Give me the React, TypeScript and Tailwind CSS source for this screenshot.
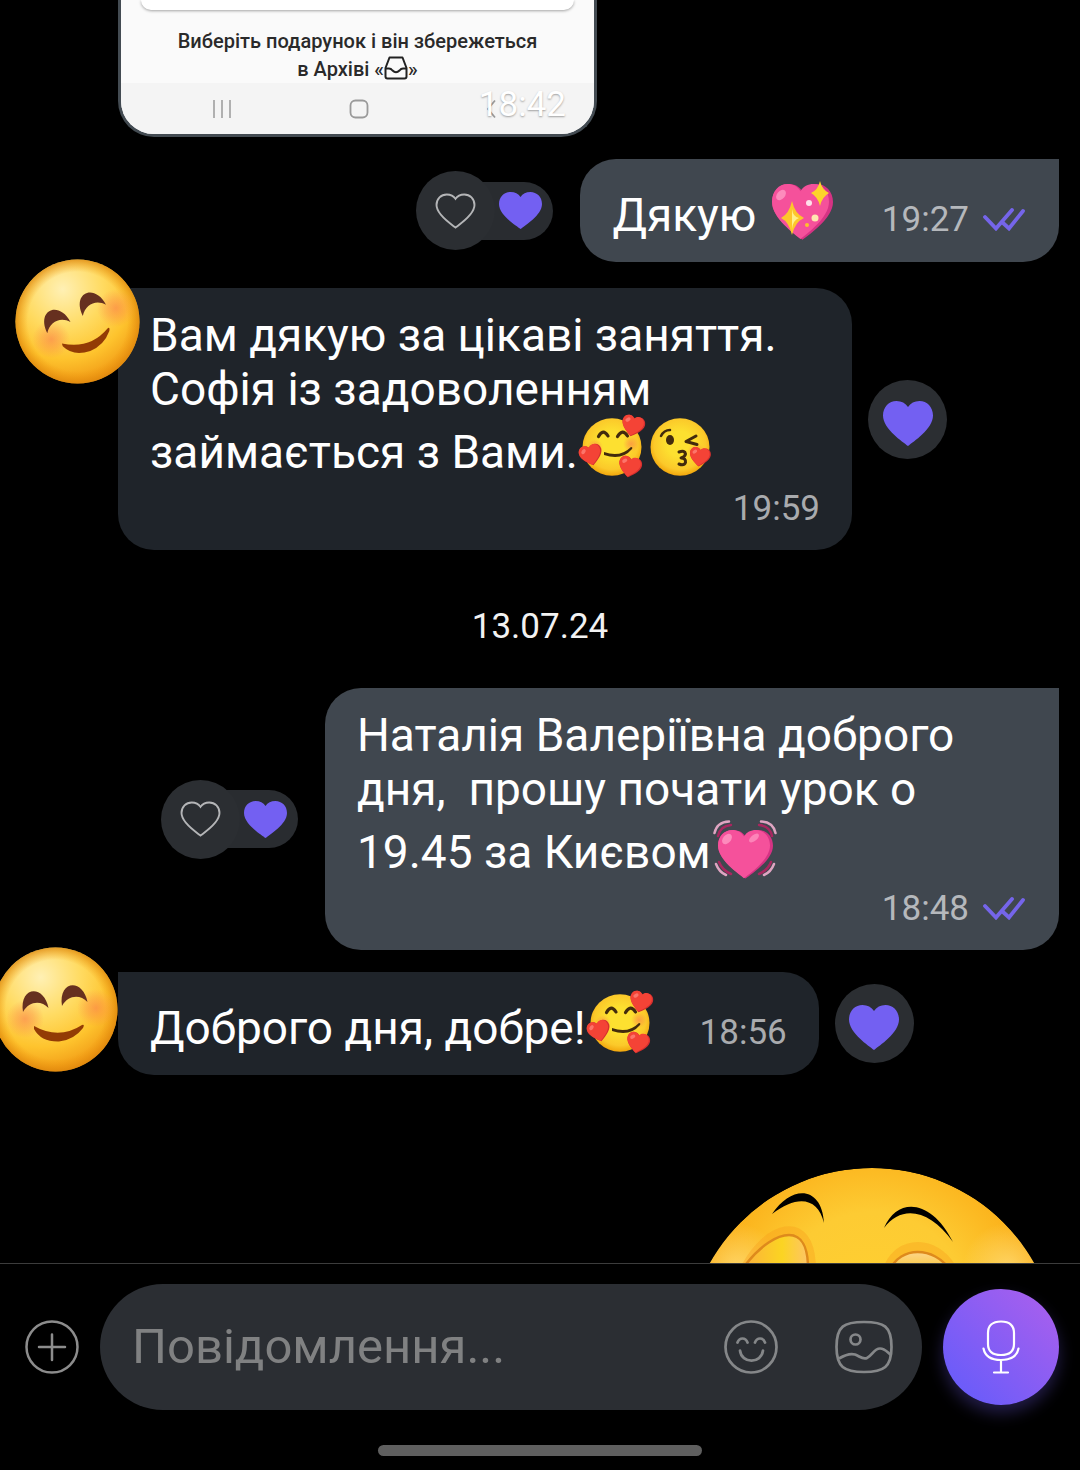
import React, { useState } from "react";

const HEART =
  "M25 45C20 41 0 28 0 14.5C0 6 6 0 13.5 0C18.5 0 22.5 2 25 6C27.5 2 31.5 0 36.5 0C44 0 50 6 50 14.5C50 28 30 41 25 45Z";

type EmojiName = "sparkling" | "hearts" | "kiss" | "beating";

interface BubbleProps {
  children: React.ReactNode;
  emojis: EmojiName[];
  time: string;
  outgoing?: boolean;
  long?: boolean;
}

// Gradients shared by all emoji and stickers
const Gradients = () => (
  <svg className="absolute size-0" aria-hidden="true">
    <defs>
      <radialGradient id="face" cx="0.5" cy="0.45" r="0.55">
        <stop offset="0.4" stopColor="#fde030" />
        <stop offset="0.8" stopColor="#fbc92a" />
        <stop offset="1" stopColor="#f2a60c" />
      </radialGradient>
      <radialGradient id="ball" cx="0.38" cy="0.24" r="0.8">
        <stop offset="0" stopColor="#fff0b4" />
        <stop offset="0.4" stopColor="#ffdb62" />
        <stop offset="0.7" stopColor="#fec42e" />
        <stop offset="1" stopColor="#ef9412" />
      </radialGradient>
      <radialGradient id="rim" cx="0.5" cy="0.5" r="0.5">
        <stop offset="0.8" stopColor="#f0960c" stopOpacity="0" />
        <stop offset="1" stopColor="#dc850c" stopOpacity="0.75" />
      </radialGradient>
      <radialGradient id="blush">
        <stop offset="0" stopColor="#fb7d4c" stopOpacity="0.6" />
        <stop offset="0.5" stopColor="#fb8548" stopOpacity="0.35" />
        <stop offset="1" stopColor="#fb8a4c" stopOpacity="0" />
      </radialGradient>
      <radialGradient id="big" cx="0.5" cy="0.38" r="0.58">
        <stop offset="0" stopColor="#ffd030" />
        <stop offset="0.45" stopColor="#fdcb33" />
        <stop offset="1" stopColor="#fa9c06" />
      </radialGradient>
      <radialGradient id="glow">
        <stop offset="0" stopColor="#ffdf80" stopOpacity="0.7" />
        <stop offset="1" stopColor="#ffdf80" stopOpacity="0" />
      </radialGradient>
      <linearGradient id="lid" x1="0" y1="0" x2="1" y2="0">
        <stop offset="0" stopColor="#fbb03c" />
        <stop offset="0.6" stopColor="#fbd422" />
        <stop offset="1" stopColor="#fdc566" />
      </linearGradient>
      <linearGradient id="lidRight" x1="0" y1="0" x2="0" y2="1">
        <stop offset="0" stopColor="#fdd58a" />
        <stop offset="1" stopColor="#fbc93a" />
      </linearGradient>
      <clipPath id="bigClip">
        <circle cx="186" cy="186" r="186" />
      </clipPath>
    </defs>
  </svg>
);

const RedHeart = ({ x, y, size, angle }: { x: number; y: number; size: number; angle: number }) => (
  <g transform={`translate(${x} ${y}) rotate(${angle}) scale(${size / 50}) translate(-25 -22)`}>
    <path d={HEART} fill="#d52f2f" />
    <path d={HEART} fill="#f44336" transform="scale(0.94 0.97)" />
    <ellipse cx="11" cy="11" rx="6" ry="4" fill="#ff8a80" opacity="0.7" transform="rotate(-40 11 11)" />
  </g>
);

const emojiArt: Record<EmojiName, React.ReactNode> = {
  sparkling: (
    <>
      <path d={HEART} transform="translate(4 5) scale(1.22 1.24)" fill="#d63384" />
      <path d={HEART} transform="translate(4 5) scale(1.14 1.22)" fill="#f5519b" />
      <ellipse cx="13" cy="16" rx="6" ry="4" fill="#ff9ac4" opacity="0.8" transform="rotate(-50 13 16)" />
      <path d="M24 22Q27 35 36 39Q27 43 24 56Q21 43 13 39Q21 35 24 22Z" fill="#fdc72b" />
      <path d="M24 30Q25 38 31 39Q25 41 24 50Z" fill="#fff08a" />
      <path d="M52 2Q54 11 61 14Q54 18 52 27Q50 18 43 14Q50 11 52 2Z" fill="#fdd32b" />
      <circle cx="41" cy="24" r="3" fill="#ffe0ea" />
      <circle cx="47" cy="39" r="3.5" fill="#ffe6b0" />
      <circle cx="39" cy="46" r="2" fill="#fdc12b" />
    </>
  ),
  hearts: (
    <>
      <ellipse cx="34" cy="31" rx="29.5" ry="28.8" fill="url(#face)" />
      <circle cx="17" cy="31" r="8" fill="url(#blush)" />
      <circle cx="53" cy="28" r="8" fill="url(#blush)" />
      <g fill="none" stroke="#422b0d" strokeWidth="3.2" strokeLinecap="round">
        <path d="M20.500 20.500Q25 12 30 20" />
        <path d="M39.500 20.500Q44.500 12 49.500 20" />
      </g>
      <path d="M26 36Q42 42 53 31Q55 31 54 33Q44 45 26 39Z" fill="#422b0d" />
      <RedHeart x={55} y={10} size={23} angle={14} />
      <RedHeart x={13} y={39} size={23} angle={-14} />
      <RedHeart x={52} y={51} size={23} angle={12} />
    </>
  ),
  kiss: (
    <>
      <ellipse cx="34" cy="31" rx="29.5" ry="28.8" fill="url(#face)" />
      <circle cx="50" cy="36" r="9" fill="url(#blush)" />
      <ellipse cx="24" cy="24" rx="4" ry="5" fill="#422b0d" />
      <g fill="none" stroke="#422b0d" strokeLinecap="round" strokeLinejoin="round" strokeWidth="2.500">
        <path d="M15 20Q18 14 24 14" />
        <path d="M50 20L40 25.500L51 28.500" strokeWidth="3" />
        <path d="M33 36Q39 34 39.500 38Q39 41 35 42Q40 42 39.500 46.500Q38 50 33 48" strokeWidth="3" />
      </g>
      <RedHeart x={54} y={41} size={21} angle={8} />
    </>
  ),
  beating: (
    <>
      <g fill="none" strokeLinecap="round" strokeWidth="2.5">
        <path d="M3.500 17Q6 6 18 5.500M64.500 17Q62 6 50 5.500M5 48Q8 56 15 59M63 48Q60 56 53 59" stroke="#dfa5c2" />
        <path d="M7 20Q9 10 20 9M61 20Q59 10 48 9M8 46Q11 54 20 58M60 46Q57 54 48 58" stroke="#a8265f" />
      </g>
      <path d={HEART} transform="translate(7 14) scale(1.1 1.08)" fill="#d63384" />
      <path d={HEART} transform="translate(7 14) scale(1.04 1.07)" fill="#f5519b" />
      <ellipse cx="16" cy="23" rx="6" ry="4" fill="#ff9ac4" opacity="0.8" transform="rotate(-50 16 23)" />
      <ellipse cx="43" cy="22" rx="6" ry="3" fill="#ff9ac4" opacity="0.7" transform="rotate(-40 43 22)" />
    </>
  ),
};

const Emoji = ({ name }: { name: EmojiName }) => (
  <svg viewBox="0 0 68 62" className="inline-block h-[62px] w-[68px] overflow-visible align-[-10px]">
    {emojiArt[name]}
  </svg>
);

const FaceSticker = ({ className, angle = 0 }: { className: string; angle?: number }) => (
  <svg viewBox="0 0 125 125" className={className}>
    <circle cx="62.500" cy="62.500" r="62" fill="url(#ball)" />
    <circle cx="62.500" cy="62.500" r="62" fill="url(#rim)" />
    <g transform={`rotate(${angle} 62 62)`}>
      <circle cx="32" cy="72" r="19" fill="url(#blush)" />
      <circle cx="103" cy="61" r="19" fill="url(#blush)" />
      <g fill="#66301f">
        <path d="M30 65C26 39 51 37 55.500 61C48 53 36 54 30 65Z" />
        <path d="M69 59C65 33 90 31 94.500 55C87 47 75 48 69 59Z" />
      </g>
      <path d="M41 79Q66 93 89 78Q92 77 90 81Q81 93 66 94.500Q48 95 41 82Z" fill="#933b05" />
    </g>
  </svg>
);

const BigSticker = () => (
  <svg viewBox="0 0 372 372" className="size-[372px]">
    <g clipPath="url(#bigClip)">
      <circle cx="186" cy="186" r="186" fill="url(#big)" />
      <circle cx="50" cy="100" r="45" fill="url(#glow)" />
      <circle cx="322" cy="100" r="45" fill="url(#glow)" />
      <path d="M62 100C82 62 122 46 123 100" fill="none" stroke="#f59c1a" strokeWidth="14" opacity="0.35" />
      <path d="M204 102C214 74 248 74 264 102" fill="none" stroke="#f59c1a" strokeWidth="14" opacity="0.35" />
      <path d="M57 100C75 76 92 67 103 67C116 67 122 80 122 100Z" fill="url(#lid)" stroke="#de8a1c" strokeWidth="2.5" />
      <path d="M204 102C214 78 248 78 264 102Z" fill="url(#lidRight)" stroke="#de8a1c" strokeWidth="2.5" />
      <path d="M86 46C106 16 136 18 138 55C132 30 112 26 86 46Z" fill="#000" />
      <path d="M198 60C212 28 246 32 267 74C244 42 216 36 198 60Z" fill="#000" />
    </g>
  </svg>
);

const HeartIcon = ({ className }: { className: string }) => (
  <svg viewBox="0 0 50 45" preserveAspectRatio="none" className={className}>
    <path d={HEART} fill="#7360f2" />
  </svg>
);

const Reaction = () => (
  <button aria-label="Вподобати" className="flex size-[79px] shrink-0 items-center justify-center rounded-full bg-[#2b2e32]">
    <HeartIcon className="mt-2 h-[45px] w-[50px]" />
  </button>
);

const ReactionPill = () => (
  <div className="flex shrink-0 items-center">
    <button
      aria-label="Вподобати"
      className="relative z-10 flex size-[79px] items-center justify-center rounded-full bg-[#2b2e32]"
    >
      <svg viewBox="-2 -2 54 49" preserveAspectRatio="none" className="h-9 w-[41px]" fill="none">
        <path d={HEART} stroke="#b4b5b7" strokeWidth="2.500" />
      </svg>
    </button>
    <div className="-ml-10 flex h-[58px] w-[98px] items-center justify-end rounded-r-full bg-[#292c30] pr-[11px]">
      <HeartIcon className="h-[37px] w-[43px]" />
    </div>
  </div>
);

const SeenIcon = () => (
  <svg viewBox="0 0 42 23" className="h-[23px] w-[42px]" fill="none" stroke="#7565ea" strokeWidth="3.800">
    <path d="M2 9L13 20.500L29 2" strokeLinecap="round" />
    <path d="M19.500 14.500L26 20.500L40 3" strokeLinecap="round" />
  </svg>
);

const MessageTime = ({ time, outgoing }: { time: string; outgoing?: boolean }) => (
  <div className={`flex items-baseline gap-[14px] text-[35px] leading-[42px] ${outgoing ? "text-[#b5b8bc]" : "text-[#a9abae]"}`}>
    <time>{time}</time>
    {outgoing && <SeenIcon />}
  </div>
);

const Bubble: React.FC<BubbleProps> = ({ children, emojis, time, outgoing, long }) => (
  <div
    className={`py-5 pl-8 ${outgoing ? "rounded-[36px] rounded-tr-none bg-[#40474f] pr-[34px]" : "rounded-[36px] rounded-tl-none bg-[#1f242a] pr-8"} ${
      long ? "w-[734px]" : "flex items-baseline gap-[46px]"
    }`}
  >
    <p className="text-[46px] leading-[54px] whitespace-pre-wrap text-white">
      {children}
      {emojis.map((name) => (
        <Emoji key={name} name={name} />
      ))}
    </p>
    <div className={long ? "mt-[9px] flex justify-end" : ""}>
      <MessageTime time={time} outgoing={outgoing} />
    </div>
  </div>
);

// Shared screenshot, scrolled so only its bottom part is visible
const PhotoMessage = () => (
  <div className="relative ml-[118px] w-[479px] overflow-hidden rounded-b-[36px] border-x-[3px] border-b-[3px] border-[#434b52] bg-[#fafafa]">
    <div className="mx-5 h-[10px] rounded-b-[10px] bg-white shadow-[0_1px_3px_rgba(0,0,0,0.35)]" />
    <p className="mt-[17px] text-center text-[20px] leading-[28px] font-medium text-[#2a2a2a]">
      Виберіть подарунок і він збережеться
      <br />в Архіві «
      <svg viewBox="0 0 24 24" className="inline-block size-6 align-[-4px]" fill="none" stroke="#222" strokeWidth="2" strokeLinejoin="round">
        <path d="M5.500 1.500H18.500L22.500 12V20.500Q22.500 22.500 20.500 22.500H3.500Q1.500 22.500 1.500 20.500V12Z" />
        <path d="M1.500 12.500H5Q7 12.500 8.500 14.500Q12 18 15.500 14.500Q17 12.500 19 12.500H22.500" />
      </svg>
      »
    </p>
    <div className="flex h-[51px] items-center justify-between bg-[#f4f4f4] pr-[98px] pl-[91px] text-[#9a9a9a]">
      <svg viewBox="0 0 20 20" className="size-5" stroke="currentColor" strokeWidth="1.500">
        <path d="M2 1V19M10 1V19M18 1V19" />
      </svg>
      <svg viewBox="0 0 20 20" className="size-5" fill="none" stroke="currentColor" strokeWidth="1.800">
        <rect x="1.500" y="1.500" width="17" height="17" rx="5" />
      </svg>
      <svg viewBox="0 0 10 20" className="h-5 w-[10px]" fill="none" stroke="currentColor" strokeWidth="1.800">
        <path d="M9 1.500L2 10L9 18.500" />
      </svg>
    </div>
    <time className="absolute right-7 bottom-2 text-[35px] leading-[42px] text-white [text-shadow:0_1px_2px_rgba(0,0,0,0.35)]">
      18:42
    </time>
  </div>
);

const Composer = () => {
  const [text, setText] = useState("");

  return (
    <footer className="shrink-0 border-t border-[#3c3c3c] bg-black pt-5">
      <form className="flex items-center gap-[21px] pr-[21px] pl-[25px]" onSubmit={(e) => e.preventDefault()}>
        <button type="button" aria-label="Додати" className="shrink-0">
          <svg viewBox="0 0 54 54" className="size-[54px]" fill="none" stroke="#8c8c8c" strokeWidth="2.500" strokeLinecap="round">
            <circle cx="27" cy="27" r="25.500" />
            <path d="M27 14.500V40M14 27H40" />
          </svg>
        </button>
        <div className="flex h-[126px] min-w-0 flex-1 items-center rounded-full bg-[#2b2e33] pr-[29px] pl-8">
          <input
            type="text"
            aria-label="Повідомлення"
            placeholder="Повідомлення..."
            value={text}
            onChange={(e) => setText(e.target.value)}
            className="h-16 min-w-0 flex-1 bg-transparent text-[49px] text-white outline-none placeholder:text-[#808182]"
          />
          <button type="button" aria-label="Стікери" className="mr-[57px] shrink-0">
            <svg viewBox="0 0 54 54" className="size-[54px]" fill="none" stroke="#858789" strokeWidth="2.700" strokeLinecap="round">
              <circle cx="27" cy="27" r="25.500" />
              <path d="M13.500 22.500Q15 18.500 18.500 18.500Q22 18.500 23.500 22.500M31 22.500Q32.500 18.500 36 18.500Q39.500 18.500 41 22.500" />
              <path d="M16 30.500C17.500 44 37.500 44 39 30.500" />
            </svg>
          </button>
          <button type="button" aria-label="Галерея" className="shrink-0">
            <svg viewBox="0 0 58 54" className="h-[54px] w-[58px]" fill="none" stroke="#858789" strokeWidth="2.700">
              <path d="M29 2C49 2 56.500 6 56.500 27C56.500 47 49 52 29 52C9 52 1.500 47 1.500 27C1.500 6 9 2 29 2Z" />
              <circle cx="20.500" cy="19.500" r="5" />
              <path d="M4 38.500C9 35.500 15 33 20 34.500C25 36.500 28 40 32 38C37 36 39 28.500 45 28.500C50 28.500 52 32 56 35" />
            </svg>
          </button>
        </div>
        <button
          type="button"
          aria-label="Голосове повідомлення"
          className="flex size-[116px] shrink-0 items-center justify-center rounded-full bg-[linear-gradient(45deg,#6c5cf9_15%,#a65fee_90%)] shadow-[0_8px_16px_rgba(115,96,242,0.3)]"
        >
          <svg viewBox="0 0 38 54" className="h-[54px] w-[38px]" fill="none" stroke="#fff" strokeWidth="2.200" strokeLinecap="round">
            <path d="M19 1.500C28 1.500 32 6 32 13V24C32 31 28 35 19 35C10 35 6 31 6 24V13C6 6 10 1.500 19 1.500Z" />
            <path d="M1.500 28.500C3 36 9 40 19 40C29 40 35 36 36.500 28.500M19 40V52.500M12 52.500H26" />
          </svg>
        </button>
      </form>
      <div className="mx-auto mt-[35px] mb-[14px] h-[11px] w-[324px] rounded-full bg-[#5f5f5f]" />
    </footer>
  );
};

export default function App() {
  return (
    <div className="flex h-screen flex-col overflow-hidden bg-black font-['Roboto',sans-serif]">
      <Gradients />
      <main className="min-h-0 flex-1 overflow-hidden">
        <PhotoMessage />

        <div className="mt-[22px] flex items-center justify-end gap-[27px] pr-[21px]">
          <ReactionPill />
          <Bubble outgoing emojis={["sparkling"]} time="19:27">
            {"Дякую "}
          </Bubble>
        </div>

        <div className="relative mt-[26px] flex items-center gap-4 pl-[118px]">
          <Bubble long emojis={["hearts", "kiss"]} time="19:59">
            Вам дякую за цікаві заняття. Софія із задоволенням займається з Вами.
          </Bubble>
          <Reaction />
          <FaceSticker className="absolute -top-[29px] left-[15px] size-[125px]" angle={-17} />
        </div>

        <p className="mt-14 mb-10 text-center text-[35px] leading-[42px] text-[#f2f2f2]">13.07.24</p>

        <div className="flex items-center justify-end gap-[27px] pr-[21px]">
          <ReactionPill />
          <Bubble outgoing long emojis={["beating"]} time="18:48">
            {"Наталія Валеріївна доброго дня,  прошу почати урок о 19.45 за Києвом"}
          </Bubble>
        </div>

        <div className="relative mt-[22px] flex items-center gap-4 pl-[118px]">
          <Bubble emojis={["hearts"]} time="18:56">
            Доброго дня, добре!
          </Bubble>
          <Reaction />
          <FaceSticker className="absolute -top-[25px] -left-[7px] size-[125px]" />
        </div>

        <div className="mt-[93px] flex justify-end pr-[22px]">
          <BigSticker />
        </div>
      </main>
      <Composer />
    </div>
  );
}
